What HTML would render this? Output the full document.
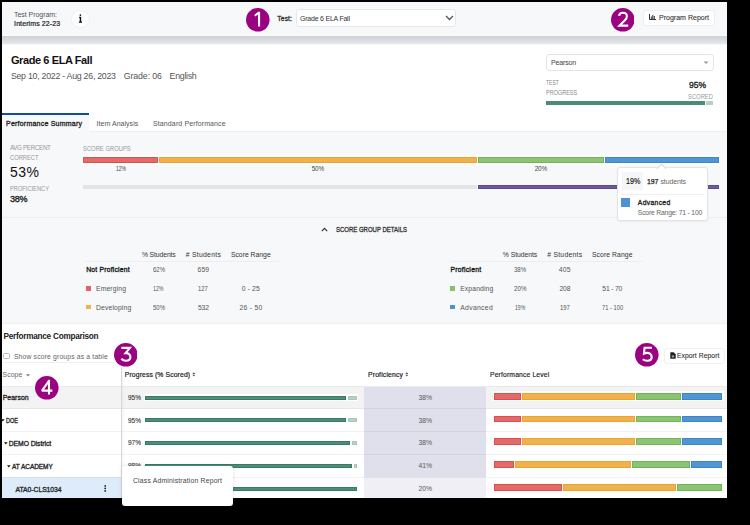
<!DOCTYPE html>
<html><head><meta charset="utf-8"><style>
html,body{margin:0;padding:0;}
body{width:750px;height:525px;position:relative;overflow:hidden;background:#000;font-family:"Liberation Sans",sans-serif;}
body>div{position:absolute;box-sizing:border-box;}
.t{white-space:nowrap;line-height:1;}
.circ{background:#9a0b7f;border-radius:50%;color:#fff;font-size:22.5px;line-height:25px;text-align:center;font-family:"Liberation Sans",sans-serif;}
</style></head><body>
<div style="left:2px;top:2px;width:725px;height:496px;background:#ffffff;"></div>
<div style="left:2px;top:2px;width:725px;height:34px;background:#f7f8fa;"></div>
<div style="left:2px;top:35px;width:725px;height:1px;background:#fbfcfc;"></div>
<div style="left:2px;top:36px;width:725px;height:8px;background:linear-gradient(#ced1d4,#dcdfe2 60%,#e6e8eb);"></div>
<div style="left:2px;top:44px;width:725px;height:1px;background:#f7f8f9;"></div>
<div class="t" style="left:14.10px;top:11px;font-size:7px;line-height:7px;font-weight:400;color:#555;letter-spacing:-0.058px;">Test Program:</div>
<div class="t" style="left:14.10px;top:20px;font-size:7px;line-height:7px;font-weight:400;color:#222;letter-spacing:0.092px;-webkit-text-stroke:0.20px #222;">Interims 22-23</div>
<div style="left:71px;top:9.6px;width:18.5px;height:18.5px;border-radius:50%;background:#fff;border:1px solid #eeeff1;"></div>
<svg style="position:absolute;left:77px;top:13px" width="7" height="11" viewBox="0 0 7 11"><circle cx="3.4" cy="2.1" r="0.85" fill="#111"/><path d="M2 3.8h2.2v4.8h0.8v1.1H1.9V8.6h0.8V4.7H2z" fill="#111"/></svg>
<svg style="position:absolute;left:246.40px;top:8.20px" width="23.6" height="23.6" viewBox="0 0 23.6 23.6"><circle cx="11.8" cy="11.8" r="11.8" fill="#9b0281"/><path d="M8.2 6.9L12.2 3.8H14.1V18.6H12V6.4L9.2 8.6Z" fill="#fff"/></svg>
<div class="t" style="left:277.30px;top:15px;font-size:6.8px;line-height:7px;font-weight:400;color:#333;letter-spacing:0.075px;-webkit-text-stroke:0.30px #333;">Test:</div>
<div style="left:295.5px;top:9.4px;width:160.2px;height:17.8px;border-radius:3px;background:#fff;border:1px solid #e6e7ea;"></div>
<div class="t" style="left:300.00px;top:15px;font-size:7px;line-height:7px;font-weight:400;color:#333;letter-spacing:-0.220px;">Grade 6 ELA Fall</div>
<svg style="position:absolute;left:445px;top:15px" width="9" height="6" viewBox="0 0 9 6"><path d="M1 1l3.5 3.5L8 1" stroke="#555" stroke-width="1.3" fill="none"/></svg>
<svg style="position:absolute;left:610.50px;top:8.20px" width="23.6" height="23.6" viewBox="0 0 23.6 23.6"><circle cx="11.8" cy="11.8" r="11.8" fill="#9b0281"/><path d="M8.1 7.9C8.3 5.6 9.9 4.8 12 4.8C14.3 4.8 15.9 6.2 15.9 8.3C15.9 9.9 15.2 10.9 13.9 12.2L8.5 17.6H17.2" stroke="#fff" stroke-width="2.1" fill="none"/></svg>
<div style="left:642.5px;top:9.5px;width:72.2px;height:16.1px;border-radius:3px;background:#fff;border:1px solid #eceef0;"></div>
<svg style="position:absolute;left:648.5px;top:14px" width="7" height="6" viewBox="0 0 7 6"><path d="M0.5 0v5.5H7" stroke="#333" stroke-width="1" fill="none"/><path d="M1.8 5V2.5h1V5zM3.3 5V1h1v4zM4.8 5V2h1v3z" fill="#333"/></svg>
<div class="t" style="left:659.00px;top:14px;font-size:7px;line-height:7px;font-weight:400;color:#333;letter-spacing:0.015px;-webkit-text-stroke:0.10px #333;">Program Report</div>
<div class="t" style="left:10.90px;top:54px;font-size:11px;line-height:12px;font-weight:700;color:#111;letter-spacing:-0.400px;">Grade 6 ELA Fall</div>
<div class="t" style="left:10.90px;top:71px;font-size:8.8px;line-height:10px;font-weight:400;color:#555;letter-spacing:-0.265px;">Sep 10, 2022 - Aug 26, 2023</div>
<div class="t" style="left:123.70px;top:71px;font-size:8.8px;line-height:10px;font-weight:400;color:#555;letter-spacing:-0.100px;">Grade: 06</div>
<div class="t" style="left:169.60px;top:71px;font-size:8.8px;line-height:10px;font-weight:400;color:#555;letter-spacing:-0.283px;">English</div>
<div style="left:545.5px;top:54.3px;width:168px;height:16.6px;border-radius:3px;background:#fff;border:1px solid #e3e4e7;"></div>
<div class="t" style="left:550.90px;top:59px;font-size:7.1px;line-height:8px;font-weight:400;color:#444;letter-spacing:-0.167px;">Pearson</div>
<svg style="position:absolute;left:703px;top:61px" width="6" height="4" viewBox="0 0 6 4"><path d="M0.5 0.5L3 3 5.5 0.5z" fill="#999"/></svg>
<div class="t" style="left:545.90px;top:79px;font-size:6.6px;line-height:7px;font-weight:400;color:#888;letter-spacing:0.000px;transform:scaleX(0.7692);transform-origin:0 0;">TEST</div>
<div class="t" style="left:545.90px;top:89px;font-size:6.6px;line-height:7px;font-weight:400;color:#888;letter-spacing:0.000px;transform:scaleX(0.8342);transform-origin:0 0;">PROGRESS</div>
<div class="t" style="left:688.70px;top:80px;font-size:9.1px;line-height:10px;font-weight:400;color:#222;letter-spacing:0.000px;-webkit-text-stroke:0.35px #222;transform:scaleX(0.9396);transform-origin:0 0;">95%</div>
<div class="t" style="left:688.10px;top:93px;font-size:6.8px;line-height:7px;font-weight:400;color:#999;letter-spacing:0.000px;transform:scaleX(0.8591);transform-origin:0 0;">SCORED</div>
<div style="left:546px;top:101.2px;width:159px;height:4.200000000000003px;background:#4b8c74;"></div>
<div style="left:705.8px;top:101.2px;width:7.300000000000068px;height:4.200000000000003px;background:#b4d0c3;"></div>
<div style="left:2px;top:113px;width:87.3px;height:2px;background:#0d4ea6;"></div>
<div style="left:2px;top:115px;width:87.3px;height:17px;background:#f7f8fa;"></div>
<div class="t" style="left:6.00px;top:120px;font-size:7px;line-height:7px;font-weight:400;color:#222;letter-spacing:0.222px;-webkit-text-stroke:0.30px #222;">Performance Summary</div>
<div class="t" style="left:96.60px;top:120px;font-size:7px;line-height:7px;font-weight:400;color:#555;letter-spacing:0.033px;">Item Analysis</div>
<div class="t" style="left:153.00px;top:120px;font-size:7px;line-height:7px;font-weight:400;color:#555;letter-spacing:0.116px;">Standard Performance</div>
<div style="left:2px;top:132px;width:725px;height:191px;background:#f7f8fa;"></div>
<div style="left:89.3px;top:131px;width:637.7px;height:1px;background:#eceef1;"></div>
<div class="t" style="left:9.90px;top:144px;font-size:6.3px;line-height:7px;font-weight:400;color:#999;letter-spacing:-0.360px;">AVG PERCENT</div>
<div class="t" style="left:9.90px;top:154px;font-size:6.3px;line-height:7px;font-weight:400;color:#999;letter-spacing:0.000px;transform:scaleX(0.9135);transform-origin:0 0;">CORRECT</div>
<div class="t" style="left:10.00px;top:164px;font-size:14px;line-height:16px;font-weight:400;color:#111;letter-spacing:0.450px;">53%</div>
<div class="t" style="left:10.00px;top:185px;font-size:6.3px;line-height:7px;font-weight:400;color:#999;letter-spacing:0.000px;transform:scaleX(0.9049);transform-origin:0 0;">PROFICIENCY</div>
<div class="t" style="left:10.00px;top:194px;font-size:9px;line-height:10px;font-weight:400;color:#222;letter-spacing:-0.300px;-webkit-text-stroke:0.35px #222;">38%</div>
<div class="t" style="left:83.00px;top:145px;font-size:6.5px;line-height:7px;font-weight:400;color:#999;letter-spacing:0.000px;transform:scaleX(0.8983);transform-origin:0 0;">SCORE GROUPS</div>
<div style="left:81.5px;top:155px;width:638.5px;height:9.599999999999994px;background:rgba(255,255,255,0.9);"></div>
<div style="left:82.7px;top:156.8px;width:75.60000000000001px;height:6.399999999999977px;background:#e46a6a;border:1px solid #db4f4f;"></div>
<div style="left:159.4px;top:156.8px;width:317.6px;height:6.399999999999977px;background:#f0b24f;border:1px solid #eca42f;"></div>
<div style="left:477.8px;top:156.8px;width:126.19999999999999px;height:6.399999999999977px;background:#8bc574;border:1px solid #72b456;"></div>
<div style="left:605px;top:156.8px;width:113.70000000000005px;height:6.399999999999977px;background:#5096d3;border:1px solid #3b86c8;"></div>
<div class="t" style="left:115.70px;top:165px;font-size:6.3px;line-height:7px;font-weight:400;color:#444;letter-spacing:0.000px;transform:scaleX(0.7937);transform-origin:0 0;">12%</div>
<div class="t" style="left:311.70px;top:165px;font-size:6.3px;line-height:7px;font-weight:400;color:#444;letter-spacing:-0.150px;">50%</div>
<div class="t" style="left:534.70px;top:165px;font-size:6.3px;line-height:7px;font-weight:400;color:#444;letter-spacing:-0.150px;">20%</div>
<div style="left:82.7px;top:184.6px;width:394.8px;height:4.400000000000006px;background:#e4e4e4;"></div>
<div style="left:478px;top:184.6px;width:240.70000000000005px;height:4.400000000000006px;background:#6f5a9e;border:1px solid #5f4a90;"></div>
<div style="left:2px;top:217px;width:725px;height:1px;background:#ebedf0;"></div>
<div style="left:2px;top:322.5px;width:725px;height:1.0px;background:#eff0f2;"></div>
<div style="left:616.5px;top:167.2px;width:91px;height:54.1px;border-radius:3px;background:#fff;border:1px solid #e2e4e8;box-shadow:0 1px 2px rgba(0,0,0,0.06);"></div>
<div style="left:657.5px;top:164.6px;width:7px;height:7px;background:#fff;border-left:1px solid #d8dade;border-top:1px solid #d8dade;transform:rotate(45deg);"></div>
<div style="left:622.2px;top:171.9px;width:21.09999999999991px;height:18.099999999999994px;background:#f5f6f8;"></div>
<div class="t" style="left:625.60px;top:176px;font-size:8.4px;line-height:10px;font-weight:400;color:#222;letter-spacing:0.000px;-webkit-text-stroke:0.20px #222;transform:scaleX(0.8512);transform-origin:0 0;">19%</div>
<div class="t" style="left:647.00px;top:178px;font-size:7px;line-height:7px;font-weight:400;color:#222;letter-spacing:-0.100px;-webkit-text-stroke:0.25px #222;">197</div>
<div class="t" style="left:660.50px;top:178px;font-size:7px;line-height:7px;font-weight:400;color:#666;letter-spacing:-0.143px;">students</div>
<div style="left:621px;top:194px;width:84px;height:0.8000000000000114px;background:#eef0f2;"></div>
<div style="left:621px;top:198.4px;width:9px;height:8.599999999999994px;background:#4e93d1;"></div>
<div class="t" style="left:637.80px;top:199px;font-size:6.8px;line-height:7px;font-weight:400;color:#222;letter-spacing:0.314px;-webkit-text-stroke:0.30px #222;">Advanced</div>
<div class="t" style="left:637.80px;top:209px;font-size:6.8px;line-height:7px;font-weight:400;color:#666;letter-spacing:-0.195px;">Score Range: 71 - 100</div>
<svg style="position:absolute;left:320.5px;top:227px" width="7" height="5" viewBox="0 0 7 5"><path d="M0.8 4.2L3.5 1.3 6.2 4.2" stroke="#333" stroke-width="1.2" fill="none"/></svg>
<div class="t" style="left:336.00px;top:226px;font-size:6.8px;line-height:7px;font-weight:400;color:#333;letter-spacing:0.000px;-webkit-text-stroke:0.30px #333;transform:scaleX(0.8809);transform-origin:0 0;">SCORE GROUP DETAILS</div>
<div class="t" style="left:141.90px;top:251px;font-size:6.8px;line-height:7px;font-weight:400;color:#333;letter-spacing:-0.100px;">% Students</div>
<div class="t" style="left:185.70px;top:251px;font-size:6.8px;line-height:7px;font-weight:400;color:#333;letter-spacing:0.289px;"># Students</div>
<div class="t" style="left:230.90px;top:251px;font-size:6.8px;line-height:7px;font-weight:400;color:#333;letter-spacing:0.010px;">Score Range</div>
<div style="left:85.6px;top:260.5px;width:193.9px;height:0.8000000000000114px;background:#eceef1;"></div>
<div class="t" style="left:86.20px;top:266px;font-size:6.8px;line-height:7px;font-weight:400;color:#111;letter-spacing:0.200px;-webkit-text-stroke:0.30px #111;">Not Proficient</div>
<div class="t" style="left:152.70px;top:266px;font-size:6.8px;line-height:7px;font-weight:400;color:#555;letter-spacing:0.000px;transform:scaleX(0.8897);transform-origin:0 0;">62%</div>
<div class="t" style="left:197.50px;top:266px;font-size:6.8px;line-height:7px;font-weight:400;color:#555;letter-spacing:0.150px;">659</div>
<div style="left:86px;top:286.2px;width:4.799999999999997px;height:4.600000000000023px;background:#e06666;"></div>
<div class="t" style="left:96.00px;top:285px;font-size:6.8px;line-height:7px;font-weight:400;color:#555;letter-spacing:0.129px;">Emerging</div>
<div class="t" style="left:153.40px;top:285px;font-size:6.8px;line-height:7px;font-weight:400;color:#555;letter-spacing:0.000px;transform:scaleX(0.7721);transform-origin:0 0;">12%</div>
<div class="t" style="left:198.40px;top:285px;font-size:6.8px;line-height:7px;font-weight:400;color:#555;letter-spacing:0.000px;transform:scaleX(0.8584);transform-origin:0 0;">127</div>
<div class="t" style="left:241.70px;top:285px;font-size:6.8px;line-height:7px;font-weight:400;color:#555;letter-spacing:0.140px;">0 - 25</div>
<div style="left:86px;top:304.8px;width:4.799999999999997px;height:4.599999999999966px;background:#f1b24d;"></div>
<div class="t" style="left:96.00px;top:304px;font-size:6.8px;line-height:7px;font-weight:400;color:#555;letter-spacing:0.133px;">Developing</div>
<div class="t" style="left:152.70px;top:304px;font-size:6.8px;line-height:7px;font-weight:400;color:#555;letter-spacing:0.000px;transform:scaleX(0.8897);transform-origin:0 0;">50%</div>
<div class="t" style="left:197.90px;top:304px;font-size:6.8px;line-height:7px;font-weight:400;color:#555;letter-spacing:-0.050px;">532</div>
<div class="t" style="left:239.50px;top:304px;font-size:6.8px;line-height:7px;font-weight:400;color:#555;letter-spacing:0.267px;">26 - 50</div>
<div class="t" style="left:502.80px;top:251px;font-size:6.8px;line-height:7px;font-weight:400;color:#333;letter-spacing:-0.033px;">% Students</div>
<div class="t" style="left:547.20px;top:251px;font-size:6.8px;line-height:7px;font-weight:400;color:#333;letter-spacing:0.267px;"># Students</div>
<div class="t" style="left:592.00px;top:251px;font-size:6.8px;line-height:7px;font-weight:400;color:#333;letter-spacing:0.080px;">Score Range</div>
<div style="left:449.8px;top:260.5px;width:191.90000000000003px;height:0.8000000000000114px;background:#eceef1;"></div>
<div class="t" style="left:450.40px;top:266px;font-size:6.8px;line-height:7px;font-weight:400;color:#111;letter-spacing:0.267px;-webkit-text-stroke:0.30px #111;">Proficient</div>
<div class="t" style="left:514.00px;top:266px;font-size:6.8px;line-height:7px;font-weight:400;color:#555;letter-spacing:0.000px;transform:scaleX(0.8897);transform-origin:0 0;">38%</div>
<div class="t" style="left:558.80px;top:266px;font-size:6.8px;line-height:7px;font-weight:400;color:#555;letter-spacing:0.250px;">405</div>
<div style="left:449.8px;top:286.2px;width:4.800000000000011px;height:4.600000000000023px;background:#86c06b;"></div>
<div class="t" style="left:460.20px;top:285px;font-size:6.8px;line-height:7px;font-weight:400;color:#555;letter-spacing:0.112px;">Expanding</div>
<div class="t" style="left:514.00px;top:285px;font-size:6.8px;line-height:7px;font-weight:400;color:#555;letter-spacing:0.000px;transform:scaleX(0.9191);transform-origin:0 0;">20%</div>
<div class="t" style="left:559.40px;top:285px;font-size:6.8px;line-height:7px;font-weight:400;color:#555;letter-spacing:-0.050px;">208</div>
<div class="t" style="left:602.30px;top:285px;font-size:6.8px;line-height:7px;font-weight:400;color:#555;letter-spacing:-0.200px;">51 - 70</div>
<div style="left:449.8px;top:304.8px;width:4.800000000000011px;height:4.599999999999966px;background:#4e93d1;"></div>
<div class="t" style="left:460.20px;top:304px;font-size:6.8px;line-height:7px;font-weight:400;color:#555;letter-spacing:0.329px;">Advanced</div>
<div class="t" style="left:515.00px;top:304px;font-size:6.8px;line-height:7px;font-weight:400;color:#555;letter-spacing:0.000px;transform:scaleX(0.7500);transform-origin:0 0;">19%</div>
<div class="t" style="left:560.10px;top:304px;font-size:6.8px;line-height:7px;font-weight:400;color:#555;letter-spacing:0.000px;transform:scaleX(0.8761);transform-origin:0 0;">197</div>
<div class="t" style="left:601.70px;top:304px;font-size:6.8px;line-height:7px;font-weight:400;color:#555;letter-spacing:0.000px;transform:scaleX(0.8474);transform-origin:0 0;">71 - 100</div>
<div class="t" style="left:3.50px;top:332px;font-size:8.2px;line-height:9px;font-weight:700;color:#222;letter-spacing:-0.238px;">Performance Comparison</div>
<div style="left:3.4px;top:352.8px;width:6.3px;height:6px;border:1px solid #b9b9b9;border-radius:1.5px;background:#fff;"></div>
<div class="t" style="left:13.90px;top:353px;font-size:6.8px;line-height:7px;font-weight:400;color:#666;letter-spacing:0.159px;">Show score groups as a table</div>
<div style="left:2px;top:362.4px;width:119px;height:0.8000000000000114px;background:#f0f0f0;"></div>
<div class="t" style="left:2.60px;top:371px;font-size:6.8px;line-height:7px;font-weight:400;color:#666;letter-spacing:0.075px;">Scope</div>
<svg style="position:absolute;left:26px;top:374px" width="4" height="3" viewBox="0 0 4 3"><path d="M0 0.3h4L2 2.6z" fill="#777"/></svg>
<div class="t" style="left:124.80px;top:371px;font-size:6.8px;line-height:7px;font-weight:400;color:#222;letter-spacing:0.122px;-webkit-text-stroke:0.20px #222;">Progress (% Scored)</div>
<svg style="position:absolute;left:192px;top:372px" width="4" height="5" viewBox="0 0 4 5"><path d="M0.3 2L1.8 0.2 3.3 2zM0.3 2.8L1.8 4.6 3.3 2.8z" fill="#555"/></svg>
<div class="t" style="left:368.00px;top:371px;font-size:6.8px;line-height:7px;font-weight:400;color:#222;letter-spacing:0.170px;-webkit-text-stroke:0.20px #222;">Proficiency</div>
<svg style="position:absolute;left:405.4px;top:372px" width="4" height="5" viewBox="0 0 4 5"><path d="M0.3 2L1.8 0.2 3.3 2zM0.3 2.8L1.8 4.6 3.3 2.8z" fill="#555"/></svg>
<div class="t" style="left:490.00px;top:371px;font-size:6.8px;line-height:7px;font-weight:400;color:#222;letter-spacing:0.137px;-webkit-text-stroke:0.15px #222;">Performance Level</div>
<div style="left:664.3px;top:347.5px;width:61px;height:16.1px;border-radius:3px;background:#fff;border:1px solid #eef0f2;"></div>
<svg style="position:absolute;left:670px;top:352px" width="6" height="7" viewBox="0 0 6 7"><path d="M0.3 0.3h3.4l2 2v4.4H0.3z" fill="#222"/><path d="M3 3v2.2M2 4.3l1 1 1-1" stroke="#fff" stroke-width="0.7" fill="none"/></svg>
<div class="t" style="left:676.90px;top:352px;font-size:6.8px;line-height:7px;font-weight:400;color:#333;letter-spacing:0.042px;-webkit-text-stroke:0.10px #333;">Export Report</div>
<div style="left:2px;top:386px;width:725px;height:22.69999999999999px;background:#f3f3f3;"></div>
<div style="left:2px;top:477px;width:119px;height:21px;background:#ddebfb;"></div>
<div style="left:364px;top:386px;width:122px;height:91px;background:#e0e0ec;"></div>
<div style="left:364px;top:477px;width:122px;height:21px;background:#efeff5;"></div>
<div style="left:2px;top:408.2px;width:725px;height:1.0px;background:rgba(0,0,0,0.05);"></div>
<div style="left:2px;top:430.7px;width:725px;height:1.0px;background:rgba(0,0,0,0.05);"></div>
<div style="left:2px;top:453.5px;width:725px;height:1.0px;background:rgba(0,0,0,0.05);"></div>
<div style="left:2px;top:476.5px;width:725px;height:1.0px;background:rgba(0,0,0,0.05);"></div>
<div style="left:2px;top:385.6px;width:725px;height:0.6999999999999886px;background:#eaeaea;"></div>
<div style="left:120.6px;top:367px;width:0.8000000000000114px;height:131px;background:#e2e2e2;"></div>
<div style="left:121.4px;top:367px;width:3.5999999999999943px;height:131px;background:linear-gradient(90deg,rgba(0,0,0,0.05),rgba(0,0,0,0));"></div>
<div class="t" style="left:2.70px;top:394px;font-size:6.9px;line-height:7px;font-weight:400;color:#222;letter-spacing:0.050px;-webkit-text-stroke:0.30px #222;">Pearson</div>
<svg style="position:absolute;left:1.4px;top:419px" width="4" height="3" viewBox="0 0 4 3"><path d="M0 0.2h3.6L1.8 2.4z" fill="#111"/></svg>
<div class="t" style="left:6.00px;top:417px;font-size:6.8px;line-height:7px;font-weight:400;color:#222;letter-spacing:0.000px;-webkit-text-stroke:0.30px #222;transform:scaleX(0.8163);transform-origin:0 0;">DOE</div>
<svg style="position:absolute;left:3.6px;top:441.6px" width="4" height="3" viewBox="0 0 4 3"><path d="M0 0.2h3.6L1.8 2.4z" fill="#111"/></svg>
<div class="t" style="left:8.70px;top:440px;font-size:6.8px;line-height:7px;font-weight:400;color:#222;letter-spacing:-0.042px;-webkit-text-stroke:0.30px #222;">DEMO District</div>
<svg style="position:absolute;left:6.9px;top:464.8px" width="4" height="3" viewBox="0 0 4 3"><path d="M0 0.2h3.6L1.8 2.4z" fill="#111"/></svg>
<div class="t" style="left:12.00px;top:463px;font-size:6.5px;line-height:7px;font-weight:400;color:#222;letter-spacing:-0.056px;-webkit-text-stroke:0.30px #222;">AT ACADEMY</div>
<div class="t" style="left:15.50px;top:486px;font-size:6.8px;line-height:7px;font-weight:400;color:#222;letter-spacing:-0.045px;-webkit-text-stroke:0.30px #222;">ATA0-CLS1034</div>
<svg style="position:absolute;left:104px;top:485.3px" width="3" height="7" viewBox="0 0 3 7"><circle cx="1.2" cy="0.9" r="0.9" fill="#222"/><circle cx="1.2" cy="3.4" r="0.9" fill="#222"/><circle cx="1.2" cy="5.9" r="0.9" fill="#222"/></svg>
<div class="t" style="left:128.00px;top:394px;font-size:7px;line-height:7px;font-weight:400;color:#333;letter-spacing:0.000px;-webkit-text-stroke:0.10px #333;transform:scaleX(0.9286);transform-origin:0 0;">95%</div>
<div style="left:144.4px;top:394.0px;width:213.29999999999998px;height:7.300000000000011px;background:#fff;"></div>
<div style="left:145.4px;top:395.5px;width:200.73499999999999px;height:4.300000000000011px;background:#4f8d76;border:1px solid #357d61;"></div>
<div style="left:347.635px;top:395.5px;width:9.064999999999998px;height:4.300000000000011px;background:#b5d0c4;border:1px solid #a9c8bb;"></div>
<div class="t" style="left:128.00px;top:417px;font-size:7px;line-height:7px;font-weight:400;color:#333;letter-spacing:0.000px;-webkit-text-stroke:0.10px #333;transform:scaleX(0.9286);transform-origin:0 0;">95%</div>
<div style="left:144.4px;top:416.7px;width:213.29999999999998px;height:7.300000000000011px;background:#fff;"></div>
<div style="left:145.4px;top:418.2px;width:200.73499999999999px;height:4.300000000000011px;background:#4f8d76;border:1px solid #357d61;"></div>
<div style="left:347.635px;top:418.2px;width:9.064999999999998px;height:4.300000000000011px;background:#b5d0c4;border:1px solid #a9c8bb;"></div>
<div class="t" style="left:128.00px;top:439px;font-size:7px;line-height:7px;font-weight:400;color:#333;letter-spacing:0.000px;-webkit-text-stroke:0.10px #333;transform:scaleX(0.9286);transform-origin:0 0;">97%</div>
<div style="left:144.4px;top:439.2px;width:213.29999999999998px;height:7.300000000000011px;background:#fff;"></div>
<div style="left:145.4px;top:440.7px;width:204.96099999999998px;height:4.300000000000011px;background:#4f8d76;border:1px solid #357d61;"></div>
<div style="left:351.861px;top:440.7px;width:4.838999999999999px;height:4.300000000000011px;background:#b5d0c4;border:1px solid #a9c8bb;"></div>
<div class="t" style="left:128.00px;top:462px;font-size:7px;line-height:7px;font-weight:400;color:#333;letter-spacing:0.000px;-webkit-text-stroke:0.10px #333;transform:scaleX(0.9286);transform-origin:0 0;">98%</div>
<div style="left:144.4px;top:462.0px;width:213.29999999999998px;height:7.300000000000011px;background:#fff;"></div>
<div style="left:145.4px;top:463.5px;width:207.07399999999998px;height:4.300000000000011px;background:#4f8d76;border:1px solid #357d61;"></div>
<div style="left:353.974px;top:463.5px;width:2.725999999999999px;height:4.300000000000011px;background:#b5d0c4;border:1px solid #a9c8bb;"></div>
<div style="left:144.4px;top:485.0px;width:213.29999999999998px;height:7.300000000000011px;background:#fff;"></div>
<div style="left:145.4px;top:486.5px;width:211.30000000000004px;height:4.300000000000011px;background:#4f8d76;border:1px solid #357d61;"></div>
<div class="t" style="left:418.40px;top:394px;font-size:6.8px;line-height:7px;font-weight:400;color:#555;letter-spacing:0.000px;">38%</div>
<div class="t" style="left:418.40px;top:417px;font-size:6.8px;line-height:7px;font-weight:400;color:#555;letter-spacing:0.000px;">38%</div>
<div class="t" style="left:418.40px;top:439px;font-size:6.8px;line-height:7px;font-weight:400;color:#555;letter-spacing:0.000px;">38%</div>
<div class="t" style="left:418.40px;top:462px;font-size:6.8px;line-height:7px;font-weight:400;color:#555;letter-spacing:0.000px;">41%</div>
<div class="t" style="left:418.40px;top:485px;font-size:6.8px;line-height:7px;font-weight:400;color:#555;letter-spacing:0.000px;">20%</div>
<div style="left:492.5px;top:391.09999999999997px;width:231.29999999999995px;height:10.400000000000034px;background:#fff;"></div>
<div style="left:494px;top:392.9px;width:26.745300000000043px;height:6.800000000000011px;background:#e46a6a;border:1px solid #db4f4f;"></div>
<div style="left:521.7453px;top:392.9px;width:113.64999999999998px;height:6.800000000000011px;background:#f0b24f;border:1px solid #eca42f;"></div>
<div style="left:636.3953px;top:392.9px;width:44.63070000000005px;height:6.800000000000011px;background:#8bc574;border:1px solid #72b456;"></div>
<div style="left:682.0260000000001px;top:392.9px;width:40.274px;height:6.800000000000011px;background:#5096d3;border:1px solid #3b86c8;"></div>
<div style="left:492.5px;top:413.79999999999995px;width:231.29999999999995px;height:10.400000000000034px;background:#fff;"></div>
<div style="left:494px;top:415.59999999999997px;width:26.745300000000043px;height:6.800000000000011px;background:#e46a6a;border:1px solid #db4f4f;"></div>
<div style="left:521.7453px;top:415.59999999999997px;width:113.64999999999998px;height:6.800000000000011px;background:#f0b24f;border:1px solid #eca42f;"></div>
<div style="left:636.3953px;top:415.59999999999997px;width:44.63070000000005px;height:6.800000000000011px;background:#8bc574;border:1px solid #72b456;"></div>
<div style="left:682.0260000000001px;top:415.59999999999997px;width:40.274px;height:6.800000000000011px;background:#5096d3;border:1px solid #3b86c8;"></div>
<div style="left:492.5px;top:436.29999999999995px;width:231.29999999999995px;height:10.400000000000034px;background:#fff;"></div>
<div style="left:494px;top:438.09999999999997px;width:26.745300000000043px;height:6.800000000000011px;background:#e46a6a;border:1px solid #db4f4f;"></div>
<div style="left:521.7453px;top:438.09999999999997px;width:113.64999999999998px;height:6.800000000000011px;background:#f0b24f;border:1px solid #eca42f;"></div>
<div style="left:636.3953px;top:438.09999999999997px;width:44.63070000000005px;height:6.800000000000011px;background:#8bc574;border:1px solid #72b456;"></div>
<div style="left:682.0260000000001px;top:438.09999999999997px;width:40.274px;height:6.800000000000011px;background:#5096d3;border:1px solid #3b86c8;"></div>
<div style="left:492.5px;top:459.09999999999997px;width:231.29999999999995px;height:10.400000000000034px;background:#fff;"></div>
<div style="left:494px;top:460.9px;width:19.636999999999944px;height:6.800000000000011px;background:#e46a6a;border:1px solid #db4f4f;"></div>
<div style="left:514.637px;top:460.9px;width:115.94299999999998px;height:6.800000000000011px;background:#f0b24f;border:1px solid #eca42f;"></div>
<div style="left:631.5799999999999px;top:460.9px;width:58.38869999999997px;height:6.800000000000011px;background:#8bc574;border:1px solid #72b456;"></div>
<div style="left:690.9686999999999px;top:460.9px;width:31.331299999999942px;height:6.800000000000011px;background:#5096d3;border:1px solid #3b86c8;"></div>
<div style="left:492.5px;top:482.09999999999997px;width:231.29999999999995px;height:10.400000000000034px;background:#fff;"></div>
<div style="left:494px;top:483.9px;width:67.5607px;height:6.800000000000011px;background:#e46a6a;border:1px solid #db4f4f;"></div>
<div style="left:562.5607px;top:483.9px;width:113.64999999999998px;height:6.800000000000011px;background:#f0b24f;border:1px solid #eca42f;"></div>
<div style="left:677.2107px;top:483.9px;width:45.08929999999998px;height:6.800000000000011px;background:#8bc574;border:1px solid #72b456;"></div>
<div style="left:122px;top:466.4px;width:111px;height:40px;border-radius:3px;background:#fff;box-shadow:0 0 4px rgba(0,0,0,0.12);"></div>
<div class="t" style="left:133.00px;top:477px;font-size:6.8px;line-height:7px;font-weight:400;color:#444;letter-spacing:0.196px;">Class Administration Report</div>
<svg style="position:absolute;left:113.60px;top:343.20px" width="23.6" height="23.6" viewBox="0 0 23.6 23.6"><circle cx="11.8" cy="11.8" r="11.8" fill="#9b0281"/><path d="M7.4 4.9H15.9L11.6 10.1C14.6 9.9 16.4 11.7 16.4 14.1C16.4 16.6 14.4 17.8 12 17.8C10.1 17.8 8.6 17.2 7.3 15.8" stroke="#fff" stroke-width="2.1" fill="none"/></svg>
<svg style="position:absolute;left:35.45px;top:376.20px" width="23.6" height="23.6" viewBox="0 0 23.6 23.6"><circle cx="11.8" cy="11.8" r="11.8" fill="#9b0281"/><path d="M14 18.6V4.8L7 14.6H17.4" stroke="#fff" stroke-width="2.1" fill="none" stroke-linejoin="bevel"/><path d="M12.9 3.8H15.05V6H12.9Z" fill="#fff"/></svg>
<svg style="position:absolute;left:635.45px;top:343.20px" width="23.6" height="23.6" viewBox="0 0 23.6 23.6"><circle cx="11.8" cy="11.8" r="11.8" fill="#9b0281"/><path d="M17 4.8H9.6L9 10.6C9.9 10.1 10.9 9.9 12 9.9C14.7 9.9 16.7 11.6 16.7 14C16.7 16.5 14.7 17.8 12.2 17.8C10.5 17.8 9 17.3 7.8 16.3" stroke="#fff" stroke-width="2.1" fill="none"/></svg>
</body></html>
